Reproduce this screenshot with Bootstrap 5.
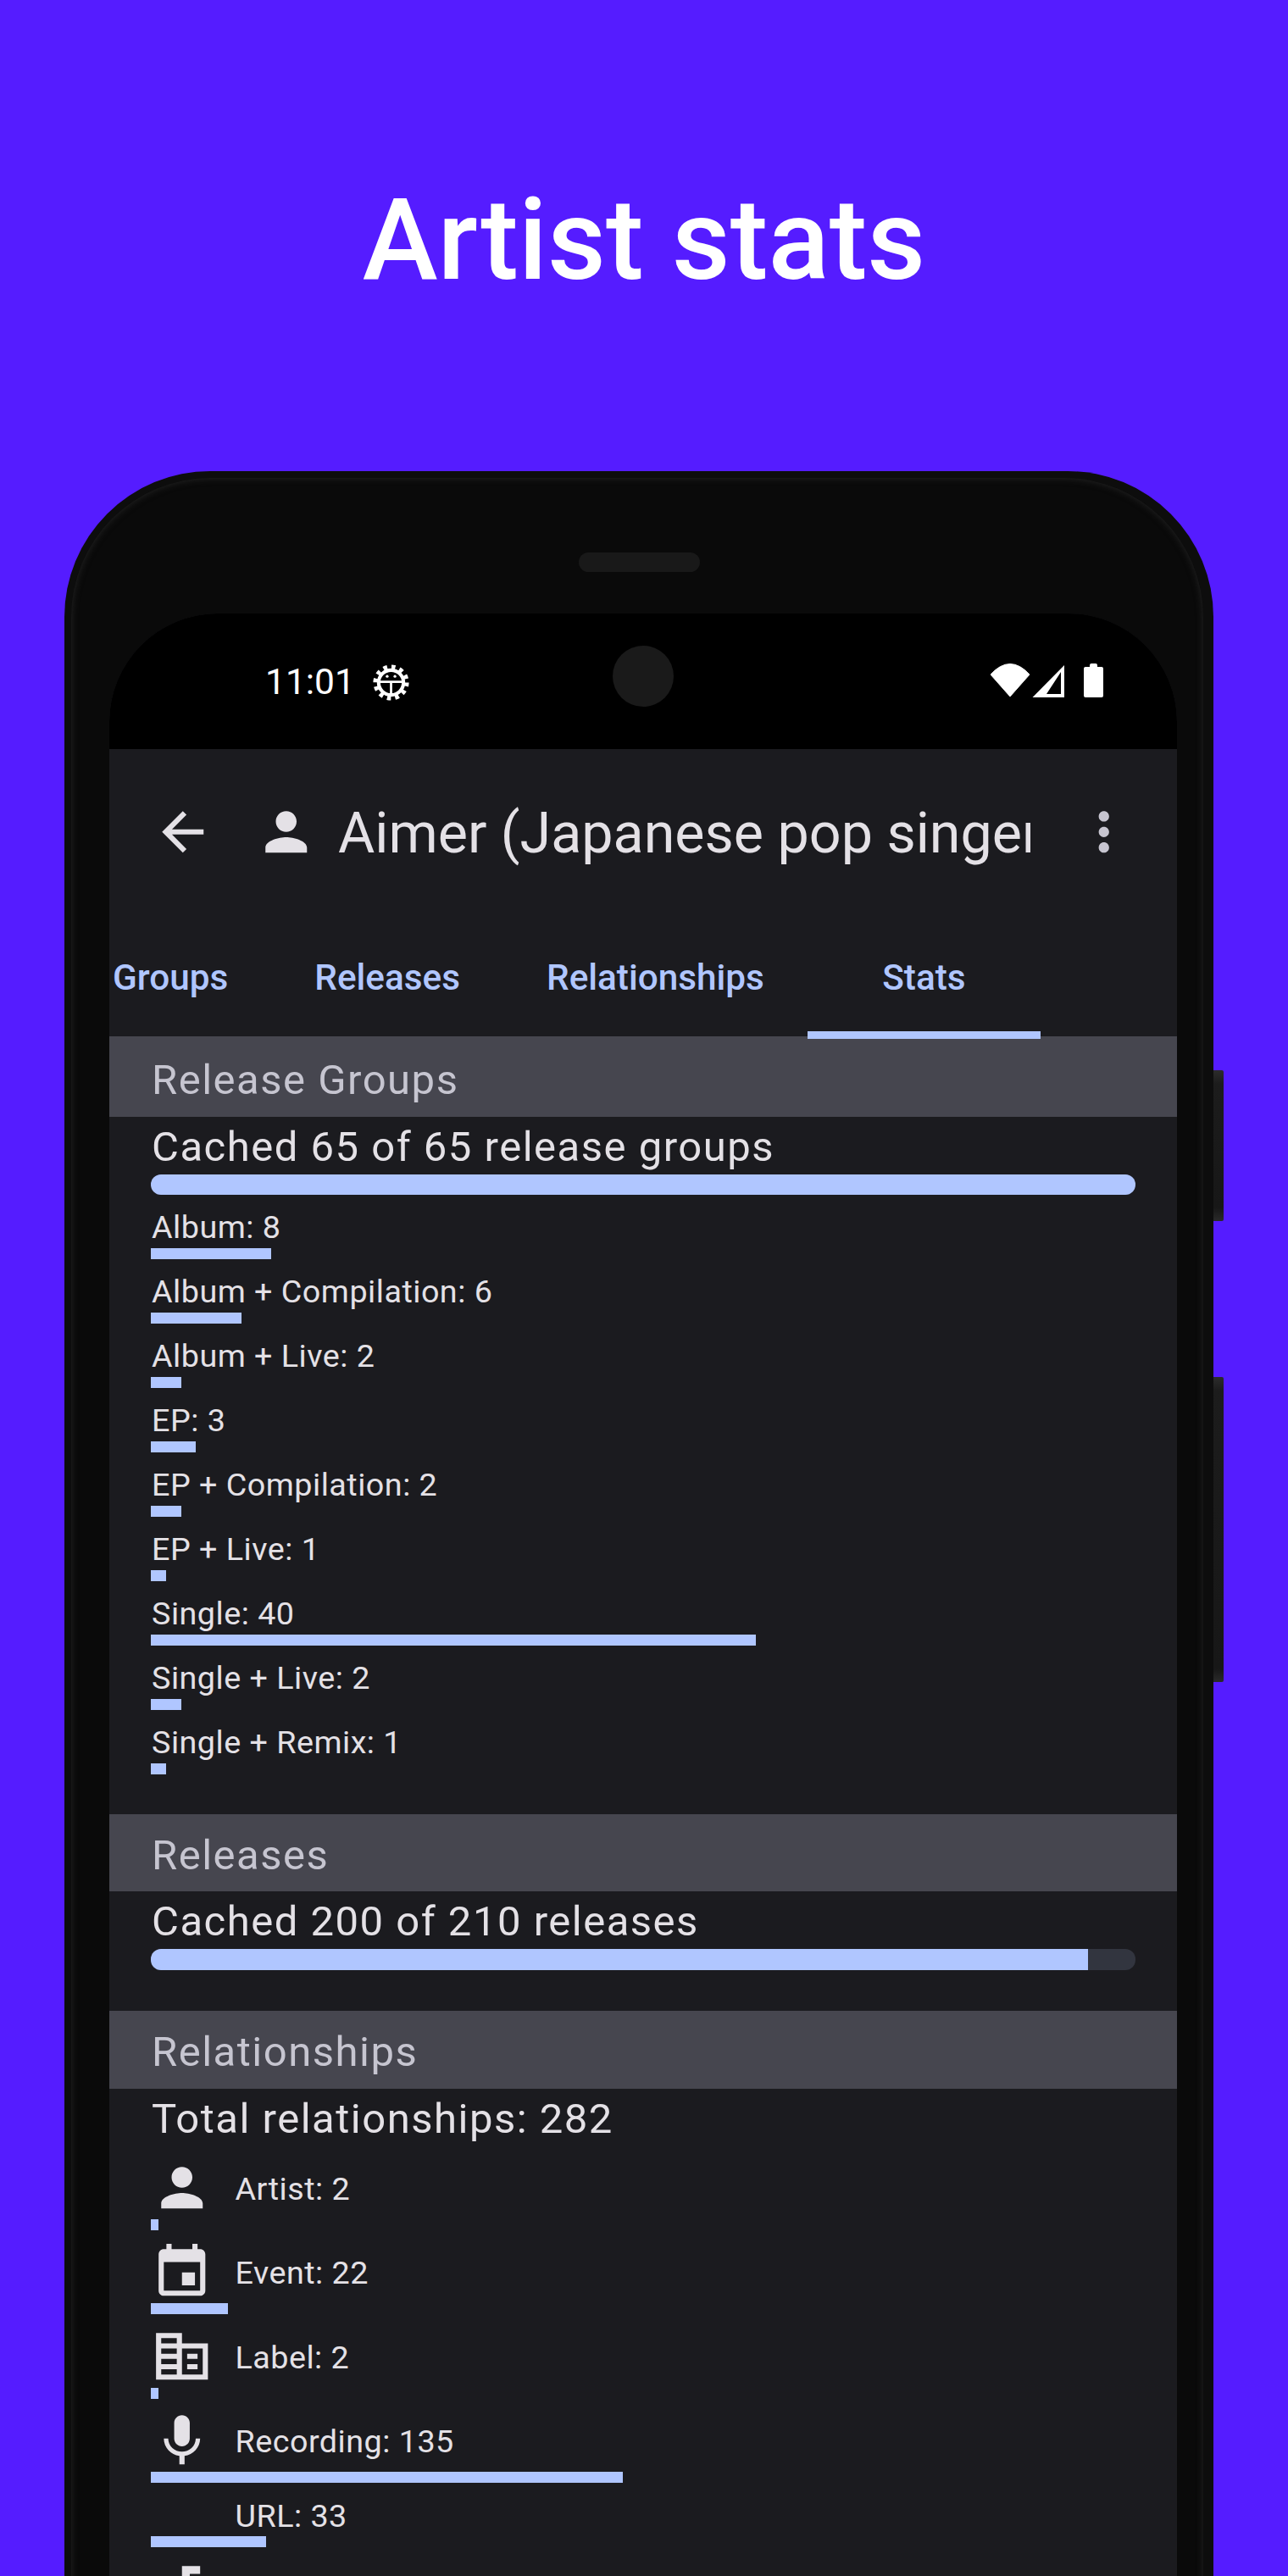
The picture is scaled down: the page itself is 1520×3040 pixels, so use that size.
<!DOCTYPE html>
<html lang="en">
<head>
  <meta charset="UTF-8" />
  <meta name="viewport" content="width=device-width, initial-scale=1" />
  <title>Artist stats</title>
  <link href="https://cdn.jsdelivr.net/npm/bootstrap@5.3.0/dist/css/bootstrap.min.css" rel="stylesheet" />
  <style>
    html, body { height: 3040px; overflow: hidden; }
    body { background: #551cff; font-family: Roboto, "Liberation Sans", sans-serif; color: #e4e1e6; }
    .promo-head { height: 556px; padding-top: 12px; }
    .promo-head h1 { font-family: Roboto, sans-serif; font-size: 134px; font-weight: 500; margin: 0; color: #fff; }
    .phone { position: relative; width: 1356px; height: 2700px; margin-left: 76px; background: #0d0d0d; border-radius: 172px 172px 0 0; padding: 8px 12px 0 8px; }
    .phone-inner { height: 100%; background: #0a0a0a; border-radius: 164px 164px 0 0; box-shadow: inset 0 0 9px #262626; padding: 0 31.5px 0 44.5px; }
    .speaker-row { height: 160px; padding-top: 88px; }
    .speaker { width: 143px; height: 23px; margin-right: 9px; border-radius: 12px; background: #191919; }
    .side-btn { position: absolute; right: -12px; width: 12px; background: linear-gradient(#2c2c2c, #1c1c1c 16px, #171717 calc(100% - 16px), #2a2a2a); border-radius: 0 2px 2px 0; }
    .side-power { top: 707px; height: 178px; }
    .side-volume { top: 1069px; height: 360px; }
    .screen { height: 2400px; background: #1b1b1f; border-radius: 128px 128px 0 0; overflow: hidden; }
    .status-strip { position: relative; height: 160px; background: #000; color: #fff; padding: 59px 86px 0 184.5px; }
    .status-time { font-size: 42.500px; line-height: 44px; margin-right: 15px; }
    .camera { position: absolute; left: 594px; top: 38px; width: 72px; height: 72px; border-radius: 50%; background: #1a1a1a; }
    .debug-gear { width: 55px; height: 55px; margin-top: -5.5px; }
    .app-title-row { height: 196px; padding: 0 0 0 50.5px; }
    .app-icon { display: block; width: 73.5px; height: 73.5px; flex: none; fill: #e4e1e6; }
    .app-icon.me-person { margin-left: 48px; }
    .app-icon.me-more { margin-right: 49px; fill: #c7c5d0; }
    .app-title { width: 817px; margin-left: 25px; padding-top: 2px; font-size: 66.400px; white-space: nowrap; overflow: hidden; line-height: 90px; }
    .tab-row { height: 143px; padding-left: 4.5px; position: relative; }
    .tab-item { position: relative; height: 143px; padding: 46px 51px 0; font-size: 42.300px; font-weight: 500; color: #b0c6ff; white-space: nowrap; line-height: 56px; }
    .tab-item:first-child { padding-left: 0; }
    .tab-active { min-width: 275px; text-align: center; }
    .tab-active::after { content: ""; position: absolute; left: 0; right: 0; bottom: -3px; height: 9px; background: #b0c6ff; z-index: 1; }
    .sect-head { background: #46464f; color: #c6c5d0; font-size: 49px; letter-spacing: 1.5px; padding-left: 50.5px; height: 92px; line-height: 97px; }
    .sect-first { height: 95px; line-height: 104px; }
    .sect-mid { height: 91px; }
    .cached-line { font-size: 49px; letter-spacing: 1.5px; padding: 4px 0 0 50.5px; line-height: 64px; }
    .cached-bar.progress { height: 24px; margin: 0 49px; border-radius: 12px; background: #32353f; }
    .cached-bar .progress-bar { background: #b0c6ff; }
    .cached-bar.thick { height: 25px; }
    .group-list { padding: 0 0 47px 49px; }
    .group-item { padding-top: 13px; }
    .group-item span { display: block; padding-left: 1.5px; font-size: 37.700px; line-height: 50px; letter-spacing: .5px; }
    .stat-bar { height: 13px; background: #b0c6ff; }
    .sect-gap { height: 48px; }
    .rel-list { padding: 12px 0 0 49px; }
    .rel-item { margin-bottom: 13px; }
    .rel-icon { width: 73.5px; flex: none; }
    .rel-icon svg { display: block; width: 73.5px; height: 73.5px; fill: #e4e1e6; }
    .rel-item span { margin-left: 26.5px; padding-top: 2px; font-size: 37.700px; line-height: 48px; letter-spacing: .5px; }
  </style>
</head>
<body>
  <div class="promo-head d-flex align-items-center justify-content-center">
    <h1>Artist stats</h1>
  </div>

  <div class="phone">
    <div class="side-btn side-power"></div>
    <div class="side-btn side-volume"></div>
    <div class="phone-inner">
      <div class="speaker-row d-flex justify-content-center"><div class="speaker"></div></div>
      <div class="screen">
        <!-- status bar -->
        <div class="status-strip d-flex align-items-start">
          <span class="status-time">11:01</span>
          <svg class="debug-gear" viewBox="0 0 60 60">
            <circle cx="30" cy="30" r="18.5" fill="none" stroke="#fff" stroke-width="9" stroke-dasharray="4.6 5.08"/>
            <circle cx="30" cy="30" r="16" fill="#000" stroke="#fff" stroke-width="4.5"/>
            <path d="M14 27.5h32v3H31.5v16h-3v-16H14z" fill="#fff"/>
            <circle cx="25" cy="22" r="1.8" fill="#fff"/><circle cx="35" cy="22" r="1.8" fill="#fff"/>
          </svg>
          <div class="camera"></div>
          <div class="ms-auto d-flex">
            <svg width="134" height="42" viewBox="0 0 134 42">
              <path d="M0 13 Q23 -12 46 13 L23 39z" fill="#fff" stroke="#fff" stroke-width="1" stroke-linejoin="round"/>
              <path d="M87 2v38H49.500z M83 10 L66 36 H83z" fill="#fff" fill-rule="evenodd"/>
              <path d="M117 2q0-2 2-2h5q2 0 2 2v2h5q2 0 2 2v32q0 2-2 2h-19q-2 0-2-2V6q0-2 2-2h5z" fill="#fff"/>
            </svg>
          </div>
        </div>

        <!-- toolbar -->
        <div class="app-title-row d-flex align-items-center">
          <svg class="app-icon" viewBox="0 0 24 24"><path d="M20 11H7.830l5.590-5.590L12 4l-8 8 8 8 1.410-1.410L7.830 13H20v-2z"/></svg>
          <svg class="app-icon me-person" viewBox="0 0 24 24"><path d="M12 12c2.210 0 4-1.790 4-4s-1.790-4-4-4-4 1.790-4 4 1.790 4 4 4zm0 2c-2.670 0-8 1.340-8 4v2h16v-2c0-2.660-5.330-4-8-4z"/></svg>
          <div class="app-title">Aimer (Japanese pop singer)</div>
          <svg class="app-icon me-more ms-auto" viewBox="0 0 24 24"><path d="M12 8c1.100 0 2-.9 2-2s-.9-2-2-2-2 .9-2 2 .9 2 2 2zm0 2c-1.100 0-2 .9-2 2s.9 2 2 2 2-.9 2-2-.9-2-2-2zm0 6c-1.100 0-2 .9-2 2s.9 2 2 2 2-.9 2-2-.9-2-2-2z"/></svg>
        </div>

        <!-- tabs -->
        <div class="d-flex tab-row">
          <div class="tab-item">Groups</div>
          <div class="tab-item">Releases</div>
          <div class="tab-item">Relationships</div>
          <div class="tab-item tab-active">Stats</div>
        </div>

        <div class="sect-head sect-first">Release Groups</div>
        <div class="cached-line">Cached 65 of 65 release groups</div>
        <div class="progress cached-bar"><div class="progress-bar" style="width:100%"></div></div>
        <div class="group-list">
          <div class="group-item"><span>Album: 8</span><div class="stat-bar" style="width:142px"></div></div>
          <div class="group-item"><span>Album + Compilation: 6</span><div class="stat-bar" style="width:107px"></div></div>
          <div class="group-item"><span>Album + Live: 2</span><div class="stat-bar" style="width:36px"></div></div>
          <div class="group-item"><span>EP: 3</span><div class="stat-bar" style="width:53px"></div></div>
          <div class="group-item"><span>EP + Compilation: 2</span><div class="stat-bar" style="width:36px"></div></div>
          <div class="group-item"><span>EP + Live: 1</span><div class="stat-bar" style="width:18px"></div></div>
          <div class="group-item"><span>Single: 40</span><div class="stat-bar" style="width:714px"></div></div>
          <div class="group-item"><span>Single + Live: 2</span><div class="stat-bar" style="width:36px"></div></div>
          <div class="group-item"><span>Single + Remix: 1</span><div class="stat-bar" style="width:18px"></div></div>
        </div>

        <div class="sect-head sect-mid">Releases</div>
        <div class="cached-line">Cached 200 of 210 releases</div>
        <div class="progress cached-bar thick"><div class="progress-bar" style="width:95.24%"></div></div>
        <div class="sect-gap"></div>

        <div class="sect-head">Relationships</div>
        <div class="cached-line">Total relationships: 282</div>
        <div class="rel-list">
          <div class="rel-item">
            <div class="d-flex align-items-center">
              <div class="rel-icon"><svg viewBox="0 0 24 24"><path d="M12 12c2.210 0 4-1.790 4-4s-1.790-4-4-4-4 1.790-4 4 1.790 4 4 4zm0 2c-2.670 0-8 1.340-8 4v2h16v-2c0-2.660-5.330-4-8-4z"/></svg></div>
              <span>Artist: 2</span>
            </div>
            <div class="stat-bar" style="width:9px"></div>
          </div>
          <div class="rel-item">
            <div class="d-flex align-items-center">
              <div class="rel-icon"><svg viewBox="0 0 24 24"><path d="M17 12h-5v5h5v-5zM16 1v2H8V1H6v2H5c-1.110 0-1.990.9-1.990 2L3 19c0 1.100.89 2 2 2h14c1.100 0 2-.9 2-2V5c0-1.100-.9-2-2-2h-1V1h-2zm3 18H5V8h14v11z"/></svg></div>
              <span>Event: 22</span>
            </div>
            <div class="stat-bar" style="width:91px"></div>
          </div>
          <div class="rel-item">
            <div class="d-flex align-items-center">
              <div class="rel-icon"><svg viewBox="0 0 24 24"><path fill-rule="evenodd" d="M2 3h10v4h10v14H2V3zM4 5v2h6V5zM4 9v2h6V9zM4 13v2h6v-2zM4 17v2h6v-2zM12 9v10h8V9zM14 11h4v2h-4zM14 15h4v2h-4z"/></svg></div>
              <span>Label: 2</span>
            </div>
            <div class="stat-bar" style="width:9px"></div>
          </div>
          <div class="rel-item">
            <div class="d-flex align-items-center">
              <div class="rel-icon"><svg viewBox="0 0 24 24"><path d="M12 14c1.660 0 2.990-1.340 2.990-3L15 5c0-1.660-1.340-3-3-3S9 3.340 9 5v6c0 1.660 1.340 3 3 3zm5.300-3c0 3-2.540 5.100-5.300 5.100S6.700 14 6.700 11H5c0 3.410 2.720 6.230 6 6.720V21h2v-3.280c3.280-.48 6-3.300 6-6.720h-1.700z"/></svg></div>
              <span>Recording: 135</span>
            </div>
            <div class="stat-bar" style="width:557px"></div>
          </div>
          <div class="rel-item">
            <div class="d-flex align-items-center">
              <div class="rel-icon"></div>
              <span>URL: 33</span>
            </div>
            <div class="stat-bar" style="width:136px"></div>
          </div>
          <div class="rel-item">
            <div class="d-flex align-items-center">
              <div class="rel-icon"><svg viewBox="0 0 24 24"><path d="M12 3v9.280c-.47-.17-.97-.28-1.500-.28C8.010 12 6 14.010 6 16.500S8.010 21 10.500 21c2.310 0 4.200-1.750 4.450-4H15V6h4V3h-7z"/></svg></div>
              <span>Work: 88</span>
            </div>
            <div class="stat-bar" style="width:363px"></div>
          </div>
        </div>
      </div>
    </div>
  </div>

  <script src="https://cdn.jsdelivr.net/npm/bootstrap@5.3.0/dist/js/bootstrap.bundle.min.js"></script>
</body>
</html>
